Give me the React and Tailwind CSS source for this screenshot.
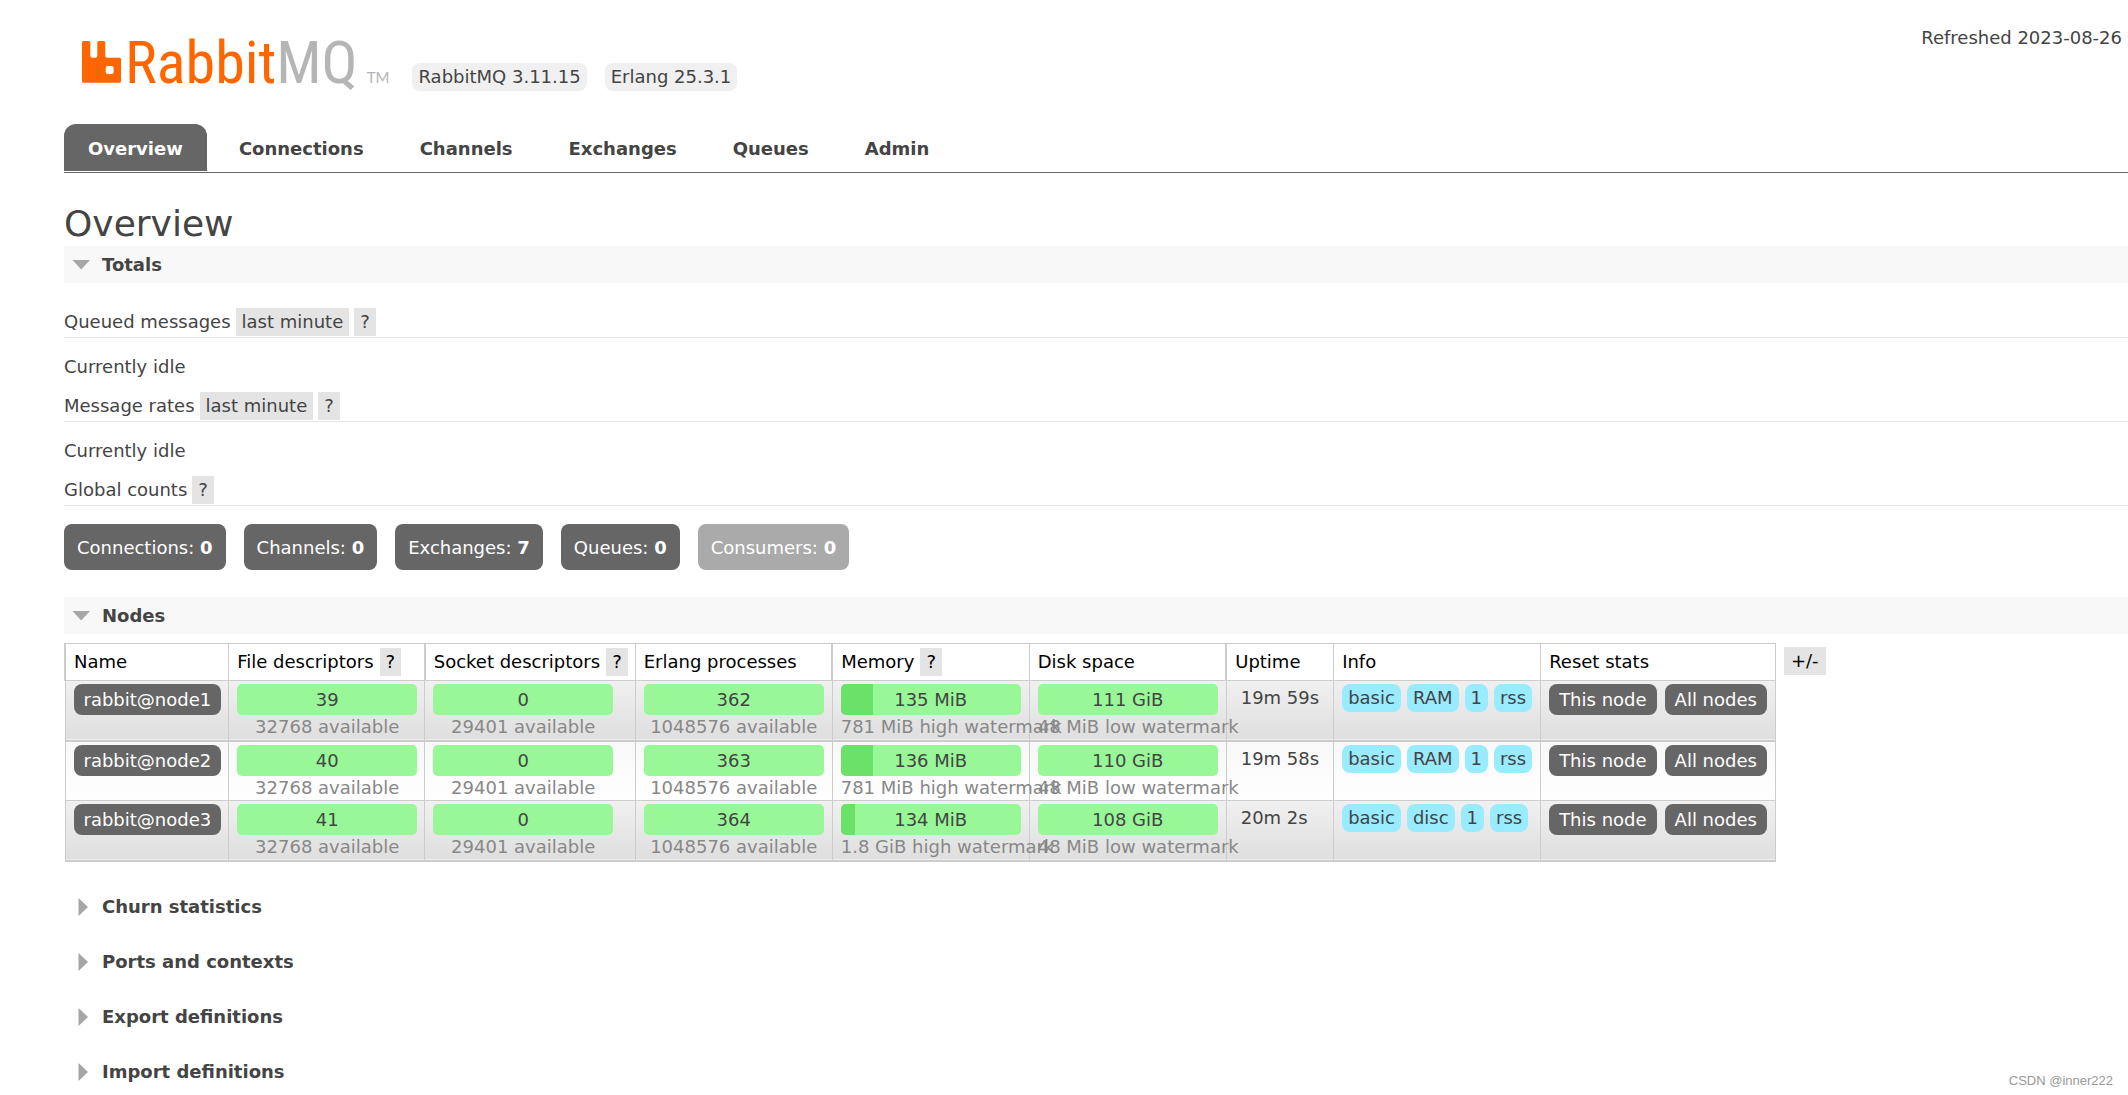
import React from "react";

const tabs = ["Overview", "Connections", "Channels", "Exchanges", "Queues", "Admin"];

const counts = [
  { label: "Connections", value: 0 },
  { label: "Channels", value: 0 },
  { label: "Exchanges", value: 7 },
  { label: "Queues", value: 0 },
  { label: "Consumers", value: 0, disabled: true },
];

const nodes = [
  { name: "rabbit@node1", fd: 39, procs: 362, mem: "135 MiB", memFill: 32, mark: "781 MiB", disk: "111 GiB", uptime: "19m 59s", kind: "RAM" },
  { name: "rabbit@node2", fd: 40, procs: 363, mem: "136 MiB", memFill: 32, mark: "781 MiB", disk: "110 GiB", uptime: "19m 58s", kind: "RAM" },
  { name: "rabbit@node3", fd: 41, procs: 364, mem: "134 MiB", memFill: 14, mark: "1.8 GiB", disk: "108 GiB", uptime: "20m 2s", kind: "disc" },
];

function Logo() {
  return (
    <a href="#overview" className="flex items-baseline" aria-label="RabbitMQ home">
      <svg width="40" height="42" viewBox="0 0 40 42" className="mr-[3px]" aria-hidden="true">
        <path
          fill="#ff6600"
          fillRule="evenodd"
          d="M1.5 0H6.8Q8.3 0 8.3 1.5V14.5Q8.3 16.8 10.5 16.8H13Q15.3 16.8 15.3 14.5V1.5Q15.3 0 16.8 0H21.7Q23.2 0 23.2 1.5V14.5Q23.2 16.8 25.4 16.8H37.5Q39 16.8 39 18.3V40.3Q39 41.8 37.5 41.8H1.5Q0 41.8 0 40.3V1.5Q0 0 1.5 0ZM25.6 25Q23.7 25 23.7 26.9V31Q23.7 33 25.6 33H29.6Q31.6 33 31.6 31V26.9Q31.6 25 29.6 25Z"
        />
      </svg>
      <span className="font-['Liberation_Sans_Narrow','Roboto_Condensed',Lato,sans-serif] text-[60px] font-normal leading-[58px] text-[#ff6600]">
        Rabbit<span className="text-[#b5b5b5]">MQ</span>
      </span>
      <span className="ml-[9px] font-[Lato,sans-serif] text-[15px] leading-4 text-[#b5b5b5]">TM</span>
    </a>
  );
}

function Help({ label }) {
  return (
    <button type="button" aria-label={label} className="h-7 bg-[#e4e4e4] px-1.5 leading-7">
      ?
    </button>
  );
}

function Section({ title, open }) {
  return (
    <h2 className={open ? "bg-[#f8f8f8]" : ""}>
      <button type="button" aria-expanded={!!open} className="flex h-[37px] w-full items-center font-bold">
        <span className="flex w-[38px] pl-2">
          {open ? (
            <svg width="18" height="10" viewBox="0 0 18 10" aria-hidden="true">
              <path d="M0.5 0H18L9.2 9.5Z" fill="#a6a6a6" />
            </svg>
          ) : (
            <svg width="16" height="18" viewBox="0 0 16 18" aria-hidden="true">
              <path d="M6.5 0V18L16 9Z" fill="#a6a6a6" />
            </svg>
          )}
        </span>
        {title}
      </button>
    </h2>
  );
}

function StatHeading({ title, range }) {
  return (
    <h3 className="flex h-[30px] gap-[5px] border-b border-[#e4e4e4] leading-7">
      <span>{title}</span>
      {range && (
        <button type="button" className="h-7 bg-[#e4e4e4] px-1.5 leading-7">
          last minute
        </button>
      )}
      <Help label={"Help for " + title} />
    </h3>
  );
}

function Th({ children, help, thick }) {
  return (
    <th className={"h-[37px] border border-[#ccc] pl-2 pr-[7px] font-normal text-black " + (thick ? "border-l-2" : "")}>
      <span className="flex items-center gap-1.5 leading-7">
        {children}
        {help && <Help label={"Help for " + children} />}
      </span>
    </th>
  );
}

function Gauge({ value, note, fill = 0, tight }) {
  return (
    <td className={tight ? tightCell : cell}>
      <div className="flex w-[180px] flex-col items-stretch">
        <div className="relative h-[31px] overflow-hidden rounded-[5px] bg-[#98f898] text-center leading-8">
          <div className="absolute inset-y-0 left-0 bg-[#6ae26a]" style={{ width: fill }} />
          <span className="relative">{value}</span>
        </div>
        <div className="whitespace-nowrap text-center leading-[23px] text-[#888]">{note}</div>
      </div>
    </td>
  );
}

const cell = "border border-[#ccc] px-2 pt-[3px] align-top";
const tightCell = "border border-[#ccc] pl-2 pr-[7px] pt-[3px] align-top";
const darkButton = "h-[31px] rounded-lg bg-[#666] px-2.5 font-medium leading-8 text-white";

export default function App() {
  return (
    <div className="relative min-h-screen overflow-hidden bg-white pl-16 font-['DejaVu_Sans',Verdana,sans-serif] text-[18px] leading-6 text-[#444]">
      <header>
        <div className="flex items-start justify-between pl-[18px] pt-[26px]">
          <div className="flex items-baseline pt-2">
            <Logo />
            <ul className="ml-[23px] flex gap-[18px]">
              <li className="rounded-lg bg-[#f0f0f0] px-1.5 leading-7">RabbitMQ 3.11.15</li>
              <li className="rounded-lg bg-[#f0f0f0] px-1.5 leading-7">Erlang 25.3.1</li>
            </ul>
          </div>
          <p className="pr-1.5">Refreshed 2023-08-26</p>
        </div>
        <nav className="mt-8 border-b border-[#666] pb-px">
          <ul className="flex gap-2">
            {tabs.map((t, i) => (
              <li key={t}>
                <a
                  href={"#" + t.toLowerCase()}
                  className={"block h-[47px] rounded-t-xl px-6 font-bold leading-[49px] " + (i === 0 ? "bg-[#666] text-white" : "")}
                >
                  {t}
                </a>
              </li>
            ))}
          </ul>
        </nav>
      </header>

      <main>
        <h1 className="pt-[29px] text-[36px] leading-[44px]">Overview</h1>

        <Section title="Totals" open />
        <div className="pt-[25px]">
          <StatHeading title="Queued messages" range />
          <p className="pb-4 pt-[19px] leading-[19px]">Currently idle</p>
          <StatHeading title="Message rates" range />
          <p className="pb-4 pt-[19px] leading-[19px]">Currently idle</p>
          <StatHeading title="Global counts" />
        </div>
        <ul className="flex gap-[18px] pb-[27px] pt-[18px]">
          {counts.map((c) => (
            <li key={c.label}>
              <a
                href={"#" + c.label.toLowerCase()}
                className={"block h-[46px] rounded-lg px-[13px] leading-[47px] text-white " + (c.disabled ? "bg-[#aaa]" : "bg-[#666]")}
              >
                {c.label}: <strong>{c.value}</strong>
              </a>
            </li>
          ))}
        </ul>

        <Section title="Nodes" open />
        <div className="flex items-start gap-2 pb-[27px] pt-[9px]">
          <table className="border-collapse whitespace-nowrap text-left">
            <thead>
              <tr>
                <Th thick>Name</Th>
                <Th help>File descriptors</Th>
                <Th help thick>Socket descriptors</Th>
                <Th>Erlang processes</Th>
                <Th help thick>Memory</Th>
                <Th>Disk space</Th>
                <Th thick>Uptime</Th>
                <Th>Info</Th>
                <Th>Reset stats</Th>
              </tr>
            </thead>
            <tbody>
              {nodes.map((n, i) => (
                <tr
                  key={n.name}
                  className={"h-[60px] " + (i % 2 ? "bg-linear-to-b from-[#f8f8f8] to-white" : "border-b-2 border-[#ccc] bg-linear-to-b from-[#f0f0f0] to-[#dfdfdf]")}
                >
                  <td className={tightCell}>
                    <a href={"#" + n.name} className={"block " + darkButton}>{n.name}</a>
                  </td>
                  <Gauge tight value={n.fd} note="32768 available" />
                  <Gauge tight value={0} note="29401 available" />
                  <Gauge value={n.procs} note="1048576 available" />
                  <Gauge value={n.mem} note={n.mark + " high watermark"} fill={n.memFill} />
                  <Gauge value={n.disk} note="48 MiB low watermark" />
                  <td className="border border-[#ccc] px-3.5 pt-[3px] align-top leading-7">{n.uptime}</td>
                  <td className={cell}>
                    <div className="flex gap-1.5">
                      {["basic", n.kind, "1", "rss"].map((t) => (
                        <abbr key={t} className="rounded-lg bg-[#99ebff] px-1.5 leading-7">{t}</abbr>
                      ))}
                    </div>
                  </td>
                  <td className={cell}>
                    <div className="flex gap-2">
                      <button type="button" className={darkButton}>This node</button>
                      <button type="button" className={darkButton}>All nodes</button>
                    </div>
                  </td>
                </tr>
              ))}
            </tbody>
          </table>
          <button type="button" aria-label="Choose columns" className="mt-1 h-7 bg-[#e4e4e4] px-[7px] leading-7 text-black">
            +/-
          </button>
        </div>

        <div className="flex flex-col gap-[18px]">
          <Section title="Churn statistics" />
          <Section title="Ports and contexts" />
          <Section title="Export definitions" />
          <Section title="Import definitions" />
        </div>
      </main>

      <p className="absolute bottom-1.5 right-[15px] font-['Liberation_Sans',Arial,sans-serif] text-[13px] leading-4 text-[#999]">
        CSDN @inner222
      </p>
    </div>
  );
}
